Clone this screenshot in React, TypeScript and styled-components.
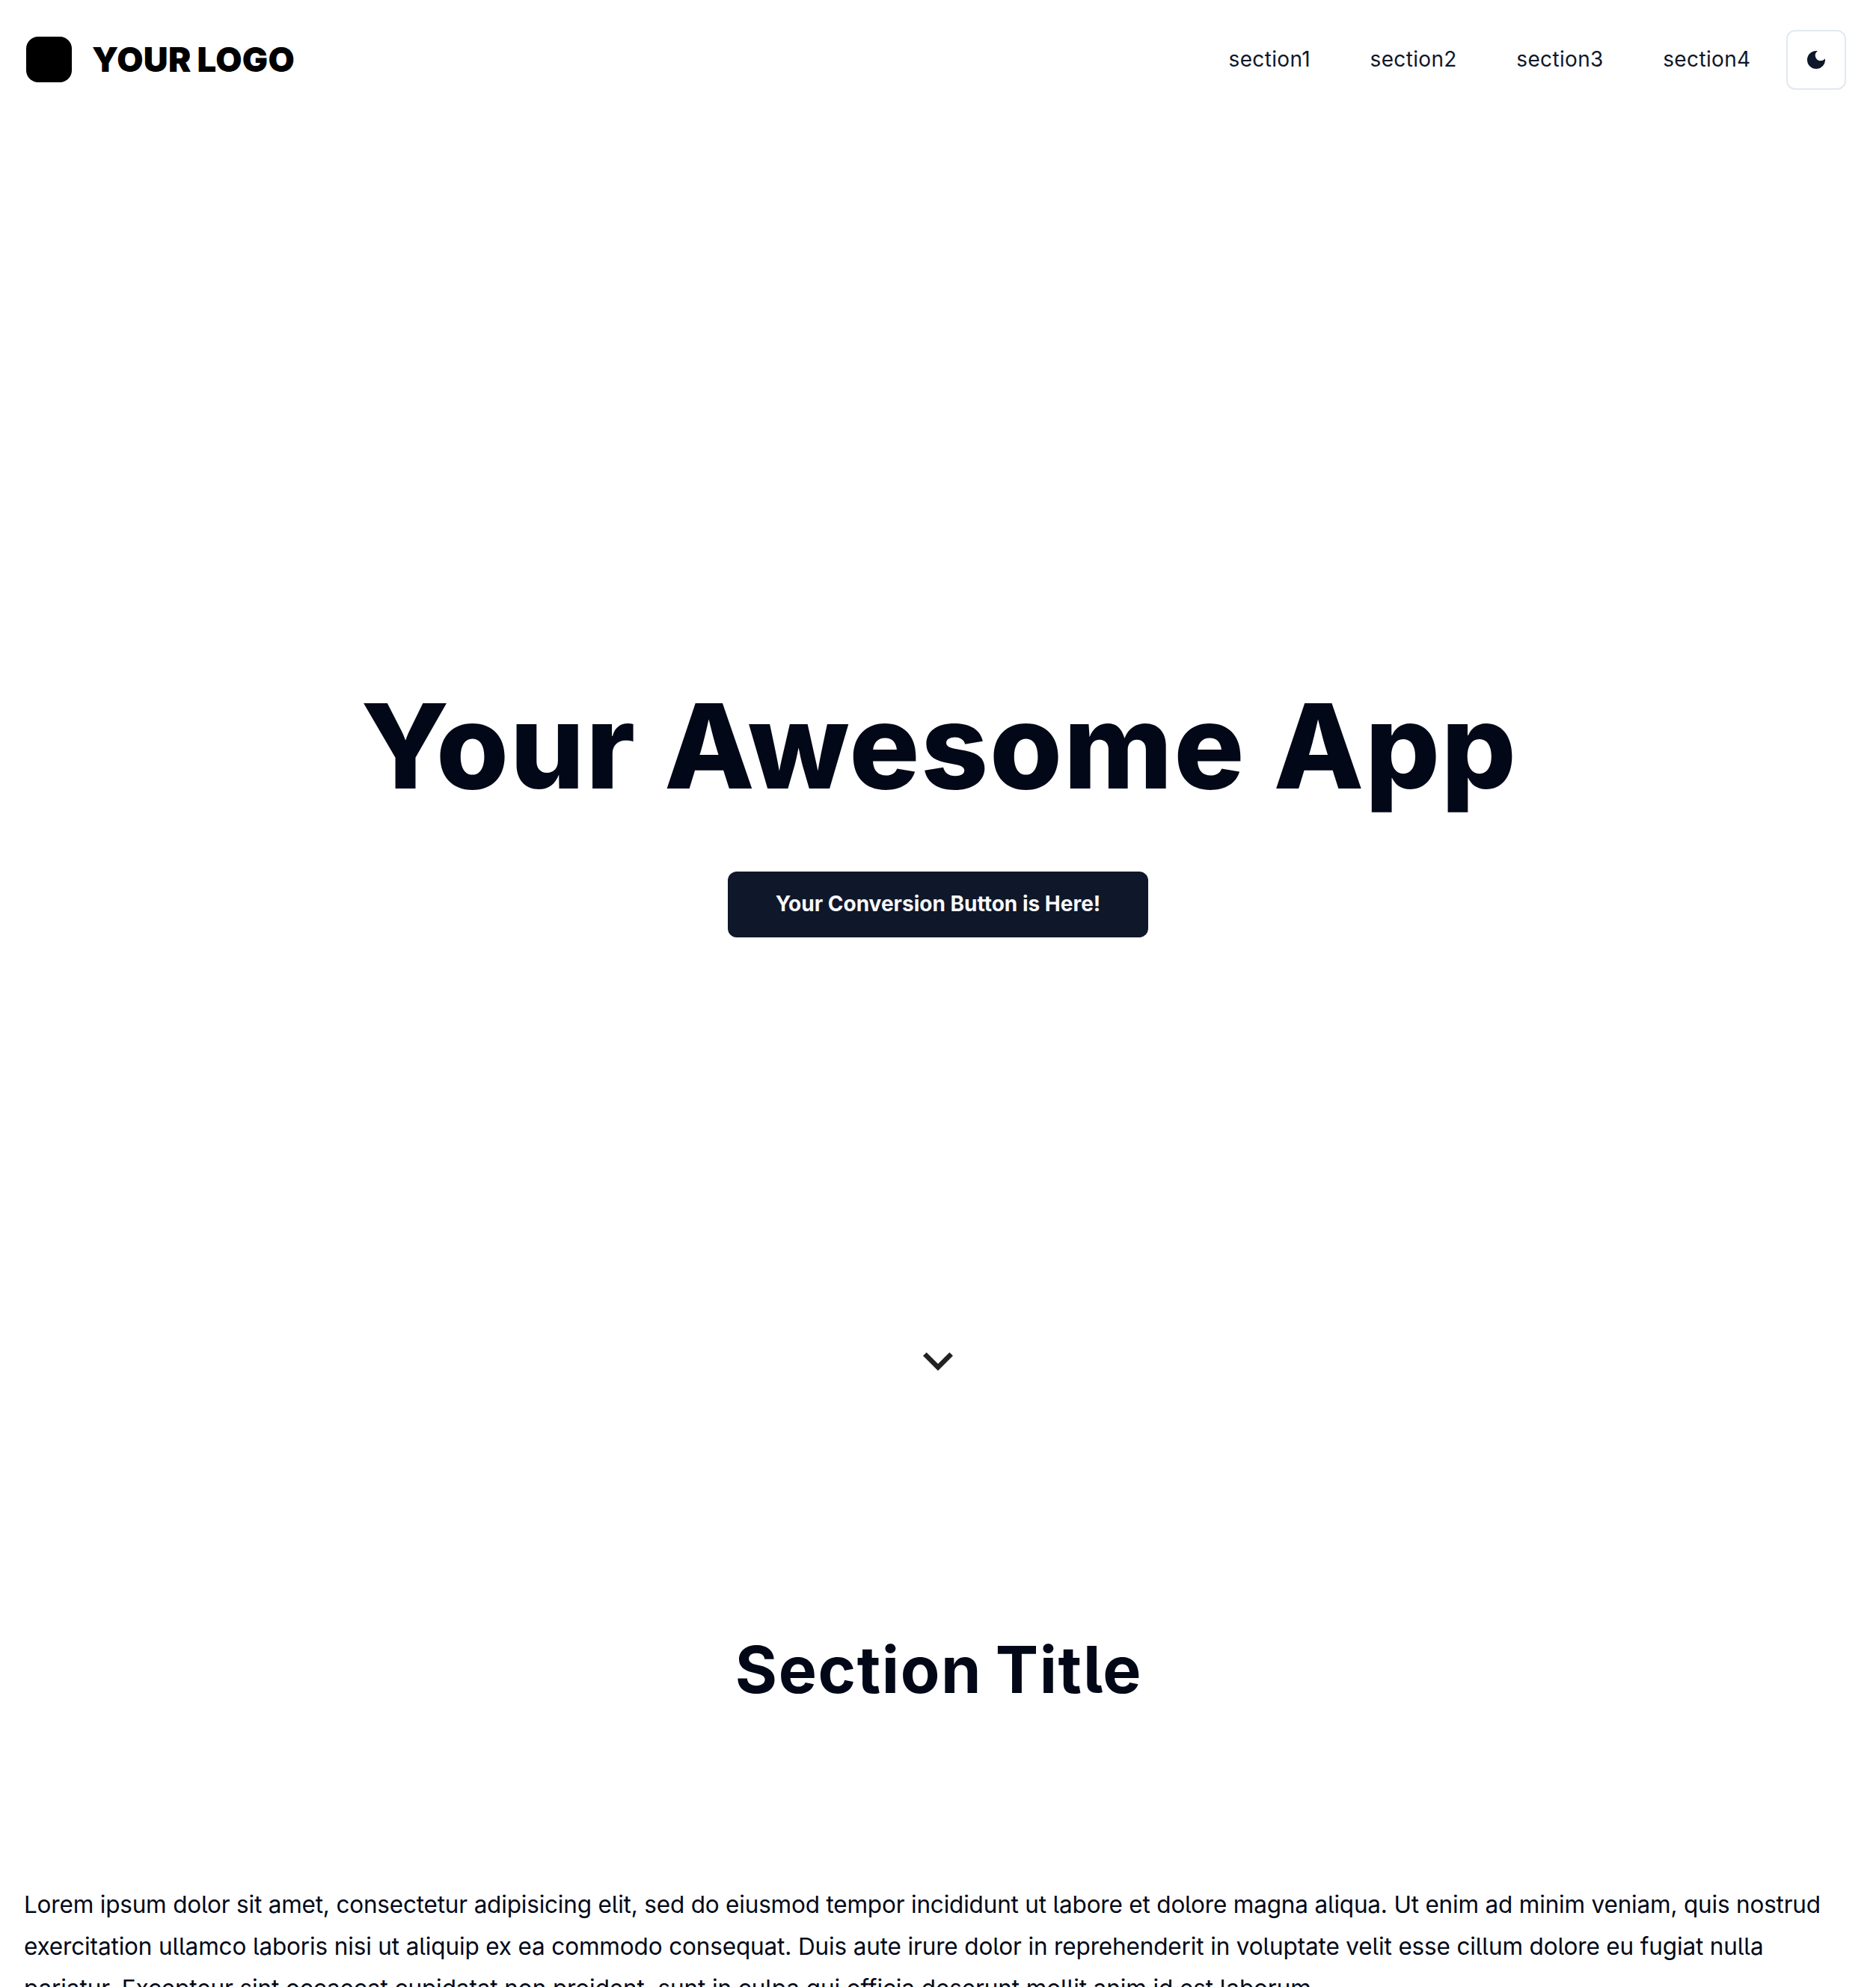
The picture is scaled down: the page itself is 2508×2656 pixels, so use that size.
import React from "react";
import styled, { createGlobalStyle } from "styled-components";
import { MdDarkMode } from "react-icons/md";

const Global = createGlobalStyle`
  * {
    box-sizing: border-box;
  }
  html,
  body {
    margin: 0;
    background: #fff;
    overflow: hidden;
  }
  body {
    font-family: Inter, "Liberation Sans", sans-serif;
    font-feature-settings: "cv05" 1;
    color: #020817;
  }
  h1,
  h2,
  p {
    margin: 0;
  }
`;

const Page = styled.div`
  height: 2656px;
  overflow: hidden;
  display: flex;
  flex-direction: column;
`;

const Header = styled.header`
  height: 160px;
  flex: none;
  display: flex;
  align-items: center;
  justify-content: space-between;
  padding: 0 40px 0 35px;
`;

const Brand = styled.a`
  display: flex;
  align-items: center;
  gap: 27px;
  color: #000;
`;

const Mark = styled.span`
  width: 61px;
  height: 61px;
  margin-bottom: 1px;
  border-radius: 16px;
  background: #000;
`;

const BrandName = styled.span`
  font-size: 45.5px;
  line-height: 60px;
  font-weight: 900;
  letter-spacing: 0.3px;
  word-spacing: -1.5px;
  white-space: nowrap;
`;

const Nav = styled.nav`
  display: flex;
  align-items: center;
  gap: 47.5px;
`;

const Links = styled.div`
  display: flex;
  gap: 79.5px;
  padding-bottom: 3px;
`;

const NavLink = styled.a`
  font-size: 28px;
  line-height: 40px;
  font-weight: 400;
  color: #0f172a;
  letter-spacing: 0.35px;
`;

const ThemeButton = styled.button`
  width: 80px;
  height: 80px;
  padding: 0;
  display: flex;
  align-items: center;
  justify-content: center;
  border: 2px solid #e2e8f0;
  border-radius: 12px;
  background: #fff;
  color: #0f172a;
`;

const Hero = styled.section`
  flex: none;
  height: 1700px;
  display: flex;
  flex-direction: column;
  align-items: center;
  padding-top: 757px;
`;

const Title = styled.h1`
  padding-left: 3px;
  font-size: 157px;
  line-height: 160px;
  font-weight: 800;
  letter-spacing: 1.7px;
  word-spacing: 1.2px;
  white-space: nowrap;
`;

const Cta = styled.button`
  flex: none;
  width: 562px;
  height: 88px;
  margin-top: 88px;
  padding: 0 0 2px;
  border: 0;
  border-radius: 12px;
  background: #0f172a;
  color: #f8fafc;
  font-family: inherit;
  font-size: 28px;
  font-weight: 700;
  white-space: nowrap;
`;

const ScrollHint = styled.svg`
  flex: none;
  width: 80px;
  height: 80px;
  margin-top: 526px;
  fill: #222;
`;

const Section = styled.section`
  flex: none;
  display: flex;
  flex-direction: column;
  padding: 322px 32px 0;
`;

const SectionTitle = styled.h2`
  padding-left: 2px;
  font-size: 86px;
  line-height: 100px;
  font-weight: 700;
  letter-spacing: 1.6px;
  word-spacing: -4.5px;
  text-align: center;
`;

const Copy = styled.p`
  margin-top: 236px;
  font-size: 31.5px;
  line-height: 56px;
  font-weight: 400;
`;

const Line = styled.span<{ $track: number }>`
  display: block;
  width: max-content;
  white-space: nowrap;
  letter-spacing: ${(p) => p.$track}px;
`;

const links = ["section1", "section2", "section3", "section4"];

const lines = [
  {
    text: "Lorem ipsum dolor sit amet, consectetur adipisicing elit, sed do eiusmod tempor incididunt ut labore et dolore magna aliqua. Ut enim ad minim veniam, quis nostrud",
    track: -0.191,
  },
  {
    text: "exercitation ullamco laboris nisi ut aliquip ex ea commodo consequat. Duis aute irure dolor in reprehenderit in voluptate velit esse cillum dolore eu fugiat nulla",
    track: -0.144,
  },
  {
    text: "pariatur. Excepteur sint occaecat cupidatat non proident, sunt in culpa qui officia deserunt mollit anim id est laborum.",
    track: -0.1,
  },
];

export default function App() {
  return (
    <Page>
      <Global />
      <Header>
        <Brand>
          <Mark />
          <BrandName>YOUR LOGO</BrandName>
        </Brand>
        <Nav>
          <Links>
            {links.map((label) => (
              <NavLink key={label}>{label}</NavLink>
            ))}
          </Links>
          <ThemeButton aria-label="Toggle theme">
            <MdDarkMode size={32} />
          </ThemeButton>
        </Nav>
      </Header>
      <Hero>
        <Title>Your Awesome App</Title>
        <Cta>Your Conversion Button is Here!</Cta>
        <ScrollHint viewBox="0 0 24 24">
          <path d="M7.41 8.59 12 13.17l4.59-4.58L18 10l-6 6-6-6z" />
        </ScrollHint>
      </Hero>
      <Section>
        <SectionTitle>Section Title</SectionTitle>
        <Copy>
          {lines.map((line) => (
            <Line key={line.text} $track={line.track}>
              {line.text}
            </Line>
          ))}
        </Copy>
      </Section>
    </Page>
  );
}
